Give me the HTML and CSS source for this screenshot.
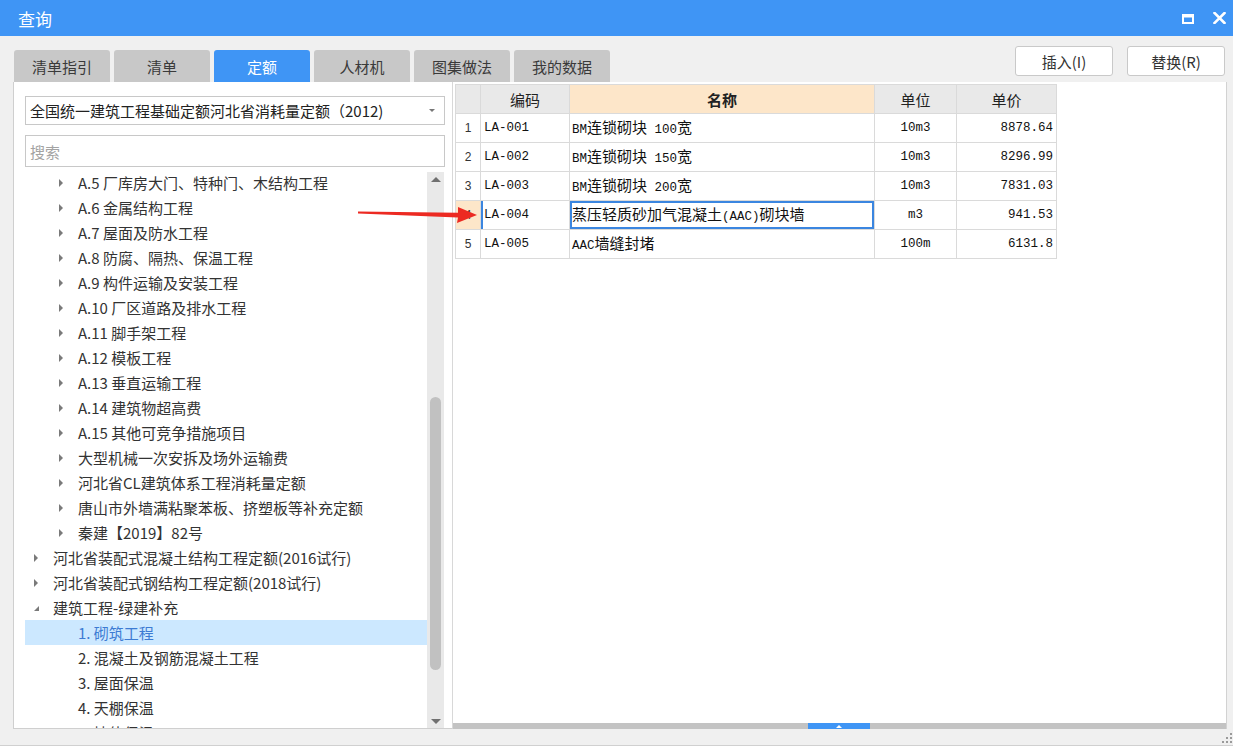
FILE: index.html
```html
<!DOCTYPE html>
<html lang="zh-CN">
<head>
<meta charset="utf-8">
<title>查询</title>
<link rel="stylesheet" href="styles.css">
</head>
<body>
<div class="titlebar">
  <span class="title">查询</span>
  <div class="win-btns">
    <svg class="ico-max" width="12" height="10" viewBox="0 0 12 10"><rect x="1" y="1.5" width="10" height="7.5" fill="none" stroke="#fff" stroke-width="2"/><rect x="0" y="0" width="12" height="3.5" fill="#fff"/></svg>
    <svg class="ico-close" width="13" height="12" viewBox="0 0 13 12"><path d="M1.5 1 L11.5 11 M11.5 1 L1.5 11" stroke="#fff" stroke-width="2.6" stroke-linecap="square"/></svg>
  </div>
</div>

<div class="toolbar">
  <div class="tabs">
    <div class="tab">清单指引</div>
    <div class="tab">清单</div>
    <div class="tab active">定额</div>
    <div class="tab">人材机</div>
    <div class="tab">图集做法</div>
    <div class="tab">我的数据</div>
  </div>
  <div class="actions">
    <button class="btn">插入(I)</button>
    <button class="btn">替换(R)</button>
  </div>
</div>

<div class="main">
  <div class="left">
    <div class="select">
      <span>全国统一建筑工程基础定额河北省消耗量定额（2012)</span>
      <span class="sel-arrow"></span>
    </div>
    <div class="search">搜索</div>
    <div class="tree-wrap">
      <div class="tree">
        <div class="row l2"><span class="caret"></span>A.5 厂库房大门、特种门、木结构工程</div>
        <div class="row l2"><span class="caret"></span>A.6 金属结构工程</div>
        <div class="row l2"><span class="caret"></span>A.7 屋面及防水工程</div>
        <div class="row l2"><span class="caret"></span>A.8 防腐、隔热、保温工程</div>
        <div class="row l2"><span class="caret"></span>A.9 构件运输及安装工程</div>
        <div class="row l2"><span class="caret"></span>A.10 厂区道路及排水工程</div>
        <div class="row l2"><span class="caret"></span>A.11 脚手架工程</div>
        <div class="row l2"><span class="caret"></span>A.12 模板工程</div>
        <div class="row l2"><span class="caret"></span>A.13 垂直运输工程</div>
        <div class="row l2"><span class="caret"></span>A.14 建筑物超高费</div>
        <div class="row l2"><span class="caret"></span>A.15 其他可竞争措施项目</div>
        <div class="row l2"><span class="caret"></span>大型机械一次安拆及场外运输费</div>
        <div class="row l2"><span class="caret"></span>河北省CL建筑体系工程消耗量定额</div>
        <div class="row l2"><span class="caret"></span>唐山市外墙满粘聚苯板、挤塑板等补充定额</div>
        <div class="row l2"><span class="caret"></span>秦建【2019】82号</div>
        <div class="row l1"><span class="caret"></span>河北省装配式混凝土结构工程定额(2016试行)</div>
        <div class="row l1"><span class="caret"></span>河北省装配式钢结构工程定额(2018试行)</div>
        <div class="row l1"><span class="caret open"></span>建筑工程-绿建补充</div>
        <div class="row l3 selected">1. 砌筑工程</div>
        <div class="row l3">2. 混凝土及钢筋混凝土工程</div>
        <div class="row l3">3. 屋面保温</div>
        <div class="row l3">4. 天棚保温</div>
        <div class="row l3">5. 墙体保温</div>
      </div>
      <div class="vscroll">
        <div class="sb-up"></div>
        <div class="sb-thumb"></div>
        <div class="sb-down"></div>
      </div>
    </div>
  </div>

  <div class="right">
    <table class="grid">
      <colgroup>
        <col class="c-no"><col class="c-code"><col class="c-name"><col class="c-unit"><col class="c-price">
      </colgroup>
      <thead>
        <tr>
          <th></th>
          <th>编码</th>
          <th class="h-name">名称</th>
          <th>单位</th>
          <th>单价</th>
        </tr>
      </thead>
      <tbody>
        <tr>
          <td class="no">1</td>
          <td class="code">LA-001</td>
          <td class="name"><span class="m">BM</span>连锁砌块<span class="m"> 100</span>宽</td>
          <td class="unit">10m3</td>
          <td class="price">8878.64</td>
        </tr>
        <tr>
          <td class="no">2</td>
          <td class="code">LA-002</td>
          <td class="name"><span class="m">BM</span>连锁砌块<span class="m"> 150</span>宽</td>
          <td class="unit">10m3</td>
          <td class="price">8296.99</td>
        </tr>
        <tr>
          <td class="no">3</td>
          <td class="code">LA-003</td>
          <td class="name"><span class="m">BM</span>连锁砌块<span class="m"> 200</span>宽</td>
          <td class="unit">10m3</td>
          <td class="price">7831.03</td>
        </tr>
        <tr class="current">
          <td class="no">4</td>
          <td class="code">LA-004</td>
          <td class="name">蒸压轻质砂加气混凝土<span class="m">(AAC)</span>砌块墙</td>
          <td class="unit">m3</td>
          <td class="price">941.53</td>
        </tr>
        <tr>
          <td class="no">5</td>
          <td class="code">LA-005</td>
          <td class="name"><span class="m">AAC</span>墙缝封堵</td>
          <td class="unit">100m</td>
          <td class="price">6131.8</td>
        </tr>
      </tbody>
    </table>
    <div class="hscroll"><div class="collapse-handle"><span class="up-tri"></span></div></div>
  </div>
</div>

<div class="statusbar">
  <svg class="grip" width="10" height="10" viewBox="0 0 10 10" fill="#9a9a9a"><rect x="8" y="0" width="2" height="2"/><rect x="4" y="4" width="2" height="2"/><rect x="8" y="4" width="2" height="2"/><rect x="0" y="8" width="2" height="2"/><rect x="4" y="8" width="2" height="2"/><rect x="8" y="8" width="2" height="2"/></svg>
</div>

<svg class="red-arrow" width="135" height="30" viewBox="0 0 135 30">
  <polygon points="8,11.6 8,13.4 108,17.4 107,23 127,15 108,7 108,12.8" fill="#ec2a22"/>
</svg>
</body>
</html>
```

FILE: styles.css
```css
* { box-sizing: border-box; }

html, body {
  margin: 0;
  padding: 0;
}

body {
  width: 1233px;
  height: 746px;
  overflow: hidden;
  position: relative;
  background: #f0f0f0;
  font-family: "Noto Sans CJK SC", "Microsoft YaHei", sans-serif;
  color: #333;
}

/* title bar */
.titlebar {
  height: 36px;
  background: #3f95f5;
  display: flex;
  align-items: center;
  justify-content: space-between;
  padding: 0 7px 0 18px;
  color: #fff;
}
.title { font-size: 17px; line-height: 1; }
.win-btns { display: flex; align-items: center; gap: 19px; }
.ico-max { display: block; margin-top: 1px; }
.ico-close { display: block; }

/* tabs + buttons */
.toolbar {
  height: 46px;
  display: flex;
  justify-content: space-between;
  padding: 0 8px 0 14px;
}
.tabs { display: flex; align-items: flex-end; gap: 4px; }
.tab {
  width: 96px;
  height: 32px;
  background: #c8c8c8;
  border-radius: 3px 3px 0 0;
  display: flex;
  align-items: center;
  justify-content: center;
  font-size: 15px;
  color: #3a3a3a;
}
.tab.active { background: #3f95f5; color: #fff; }

.actions { display: flex; gap: 14px; padding-top: 10px; }
.btn {
  width: 98px;
  height: 30px;
  background: #fff;
  border: 1px solid #c9c9c9;
  border-radius: 3px;
  font-family: "Noto Sans CJK SC", "Microsoft YaHei", sans-serif;
  font-size: 15px;
  color: #333;
  padding: 0;
}

/* main area */
.main {
  display: flex;
  height: 647px;
  margin: 0 6px 0 13px;
}

.left {
  width: 440px;
  background: #fff;
  border-left: 1px solid #cfcfcf;
  border-right: 1px solid #d8d8d8;
  border-bottom: 1px solid #cfcfcf;
  padding: 14px 0 0 11px;
  display: flex;
  flex-direction: column;
}

.select {
  width: 420px;
  height: 29px;
  border: 1px solid #c8c8c8;
  display: flex;
  align-items: center;
  justify-content: space-between;
  padding: 0 9px 0 4px;
  font-size: 15px;
  color: #222;
}
.sel-arrow {
  width: 0; height: 0;
  border-left: 3px solid transparent;
  border-right: 3px solid transparent;
  border-top: 3px solid #777;
}

.search {
  width: 420px;
  height: 32px;
  margin-top: 10px;
  border: 1px solid #c8c8c8;
  display: flex;
  align-items: center;
  padding-left: 4px;
  font-size: 15px;
  color: #a3a3a3;
}

.tree-wrap {
  flex: 1;
  margin-top: 5px;
  display: flex;
  min-height: 0;
}
.tree {
  width: 402px;
  overflow: hidden;
}
.tree-inner { margin-top: -2px; }
.row {
  height: 25px;
  display: flex;
  align-items: center;
  white-space: nowrap;
  font-size: 15px;
  color: #333;
}
.row:first-child { margin-top: -2px; }
.row.l1 { padding-left: 9px; }
.row.l2 { padding-left: 34px; }
.row.l3 { padding-left: 53px; }
.row.selected { background: #cce8ff; color: #3d7bd3; }

.caret {
  width: 19px;
  height: 10px;
  display: flex;
  align-items: center;
  flex: none;
}
.caret::before {
  content: "";
  width: 0; height: 0;
  border-left: 4px solid #7a7a7a;
  border-top: 4px solid transparent;
  border-bottom: 4px solid transparent;
}
.caret.open::before {
  border-left: 0;
  border-top: 5px solid transparent;
  border-right: 5px solid #7a7a7a;
  border-bottom: 0;
  margin-top: 2px;
}

.vscroll {
  width: 17px;
  background: #e9e9e9;
  display: flex;
  flex-direction: column;
  align-items: center;
}
.sb-up {
  margin-top: 5px;
  width: 0; height: 0;
  border-left: 5px solid transparent;
  border-right: 5px solid transparent;
  border-bottom: 5px solid #707070;
}
.sb-thumb {
  margin-top: 215px;
  width: 11px;
  height: 273px;
  background: #c1c1c1;
  border-radius: 6px;
}
.sb-down {
  margin-top: auto;
  margin-bottom: 4px;
  width: 0; height: 0;
  border-left: 5px solid transparent;
  border-right: 5px solid transparent;
  border-top: 5px solid #707070;
}

/* right grid */
.right {
  flex: 1;
  background: #fff;
  border-right: 1px solid #d2d2d2;
  display: flex;
  flex-direction: column;
  padding: 2px 0 0 2px;
}

.grid {
  border-collapse: collapse;
  table-layout: fixed;
  width: 601px;
}
.c-no { width: 25px; }
.c-code { width: 89px; }
.c-name { width: 305px; }
.c-unit { width: 82px; }
.c-price { width: 100px; }

.grid th, .grid td {
  border: 1px solid #dadada;
  height: 29px;
  padding: 0;
  white-space: nowrap;
  overflow: hidden;
}
.grid th {
  background: #e9e9e9;
  font-weight: normal;
  font-size: 15px;
  color: #222;
  text-align: center;
}
.grid th.h-name { background: #fde6c9; font-weight: bold; }

.grid td {
  color: #111;
  font-size: 15px;
  line-height: 1;
  vertical-align: middle;
}
.grid td.no {
  text-align: center;
  font-family: "Liberation Sans", Arial, sans-serif;
  font-size: 12px;
  color: #333;
}
.grid td.code, .grid td.unit, .grid td.price, .m {
  font-family: "Liberation Mono", "Courier New", monospace;
  font-size: 12.5px;
}
.grid td.code { padding-left: 3px; }
.grid td.name {
  padding-left: 2px;
  font-family: "Noto Sans CJK SC", "Microsoft YaHei", sans-serif;
}
.grid td.unit { text-align: center; }
.grid td.price { text-align: right; padding-right: 3px; }

.current td.no { background: #fde6c9; }
.current td.code { box-shadow: inset 2px 0 0 #3b86e0; }
.current td.name { box-shadow: inset 0 0 0 2px #3b86e0; }

.hscroll {
  margin-top: auto;
  margin-left: -2px;
  height: 6px;
  background: #c3c3c3;
  display: flex;
  padding-left: 355px;
}
.collapse-handle {
  width: 62px;
  height: 6px;
  background: #3f95f5;
  display: flex;
  justify-content: center;
  align-items: center;
}
.up-tri {
  width: 0; height: 0;
  border-left: 3px solid transparent;
  border-right: 3px solid transparent;
  border-bottom: 3px solid #fff;
}

/* bottom strip */
.statusbar {
  height: 17px;
  border-bottom: 1px solid #d0d0d0;
  display: flex;
  justify-content: flex-end;
  align-items: flex-end;
  padding: 0 1px 2px 0;
}
.grip { display: block; }

/* annotation arrow drawn over the screenshot */
.red-arrow {
  position: absolute;
  left: 350px;
  top: 200px;
}
```
